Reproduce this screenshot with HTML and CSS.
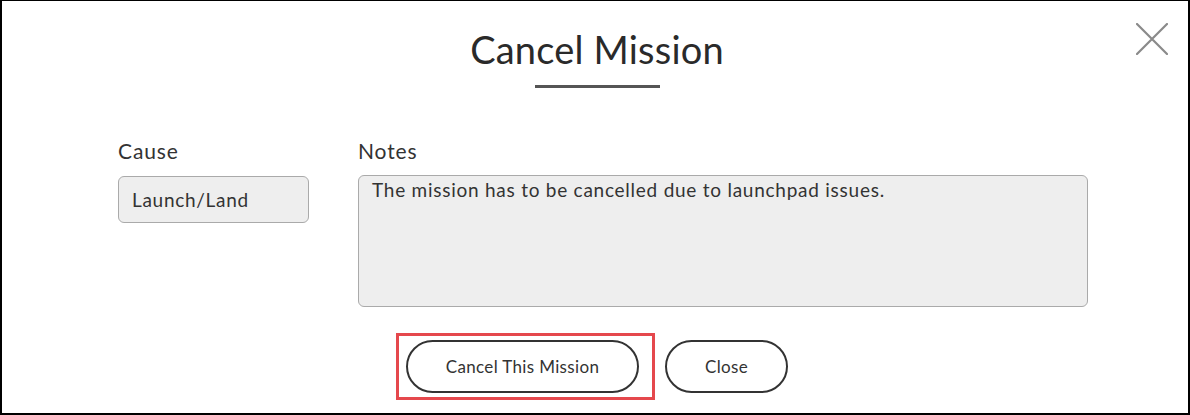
FILE: index.html
```html
<!DOCTYPE html>
<html>
<head>
<meta charset="utf-8">
<link rel="stylesheet" href="styles.css">
</head>
<body>
<div class="frame">
  <div class="modal">
    <button class="close-x" aria-label="Close">
      <svg width="32" height="32" viewBox="0 0 32 32"><path d="M1 1 L31 31 M31 1 L1 31" stroke="#8a8a8a" stroke-width="2.2" stroke-linecap="round" fill="none"/></svg>
    </button>
    <h1 class="title">Cancel Mission</h1>
    <div class="rule"></div>
    <div class="fields">
      <div class="field cause">
        <div class="label">Cause</div>
        <div class="input">Launch/Land</div>
      </div>
      <div class="field notes">
        <div class="label">Notes</div>
        <div class="textarea">The mission has to be cancelled due to launchpad issues.</div>
      </div>
    </div>
    <div class="actions">
      <div class="highlight">
        <button class="btn btn-wide">Cancel This Mission</button>
      </div>
      <button class="btn btn-close">Close</button>
    </div>
  </div>
</div>
</body>
</html>
```
FILE: styles.css
```css
html, body {
  margin: 0;
  padding: 0;
  background: #fff;
}
.frame {
  width: 1190px;
  height: 415px;
  box-sizing: border-box;
  border: 2px solid #000;
  border-top-width: 1px;
  overflow: hidden;
}
.modal {
  position: relative;
  font-family: Lato, "Open Sans", sans-serif;
  color: #333;
}
.close-x {
  position: absolute;
  top: 22px;
  left: 1134px;
  width: 32px;
  height: 32px;
  padding: 0;
  border: 0;
  background: none;
}
.close-x svg { display: block; }
.title {
  margin: 0;
  padding-top: 26px;
  text-align: center;
  font-weight: 400;
  font-size: 38px;
  line-height: 44px;
  color: #2a2a2a;
  padding-left: 4px;
  letter-spacing: 0.2px;
}
.rule {
  width: 125px;
  height: 3px;
  background: #555;
  margin: 14px 0 0 533px;
}
.fields {
  display: flex;
  gap: 49px;
  padding-left: 116px;
  margin-top: 51px;
}
.label {
  font-size: 21px;
  line-height: 24px;
  letter-spacing: 0.9px;
  color: #333;
  margin-bottom: 13px;
}
.input {
  width: 191px;
  height: 47px;
  box-sizing: border-box;
  background: #eee;
  border: 1px solid #aaa;
  border-radius: 6px;
  padding: 0 13px;
  font-size: 19px;
  line-height: 45px;
  letter-spacing: 0.7px;
  color: #333;
}
.notes .label { margin-bottom: 12px; }
.textarea {
  width: 730px;
  height: 132px;
  box-sizing: border-box;
  background: #eee;
  border: 1px solid #aaa;
  border-radius: 6px;
  padding: 2px 13px;
  font-size: 19px;
  line-height: 24px;
  letter-spacing: 0.75px;
  color: #333;
}
.actions {
  display: flex;
  align-items: center;
  gap: 10px;
  margin-top: 26px;
  padding-left: 394px;
}
.highlight {
  border: 3px solid #e5484d;
  padding: 4px 13px 4px 7px;
}
.btn {
  font-family: Lato, "Open Sans", sans-serif;
  font-size: 17px;
  letter-spacing: 0.35px;
  color: #333;
  background: #fff;
  border: 2px solid #333;
  border-radius: 27px;
  height: 53px;
  box-sizing: border-box;
  padding: 0;
}
.btn-wide { width: 233px; display: block; }
.btn-close { width: 123px; }
```
